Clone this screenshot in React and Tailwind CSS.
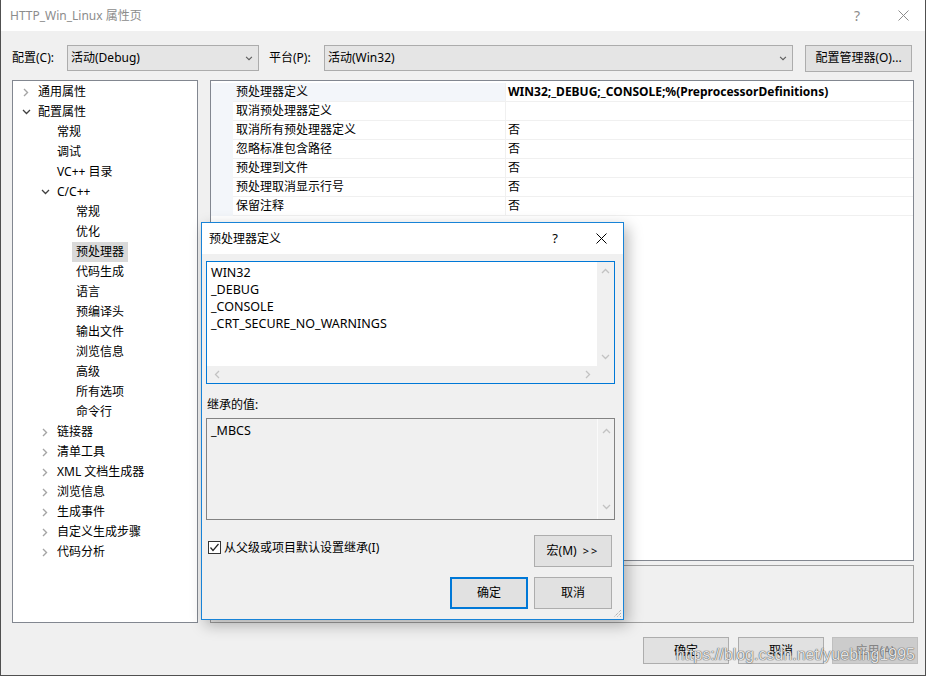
import React from 'react';

const tree = [
  { label: '通用属性', level: 0, chevron: 'right' },
  { label: '配置属性', level: 0, chevron: 'down' },
  { label: '常规', level: 1 },
  { label: '调试', level: 1 },
  { label: 'VC++ 目录', level: 1 },
  { label: 'C/C++', level: 1, chevron: 'down' },
  { label: '常规', level: 2 },
  { label: '优化', level: 2 },
  { label: '预处理器', level: 2, selected: true },
  { label: '代码生成', level: 2 },
  { label: '语言', level: 2 },
  { label: '预编译头', level: 2 },
  { label: '输出文件', level: 2 },
  { label: '浏览信息', level: 2 },
  { label: '高级', level: 2 },
  { label: '所有选项', level: 2 },
  { label: '命令行', level: 2 },
  { label: '链接器', level: 1, chevron: 'right' },
  { label: '清单工具', level: 1, chevron: 'right' },
  { label: 'XML 文档生成器', level: 1, chevron: 'right' },
  { label: '浏览信息', level: 1, chevron: 'right' },
  { label: '生成事件', level: 1, chevron: 'right' },
  { label: '自定义生成步骤', level: 1, chevron: 'right' },
  { label: '代码分析', level: 1, chevron: 'right' },
];

const props = [
  ['预处理器定义', 'WIN32;_DEBUG;_CONSOLE;%(PreprocessorDefinitions)'],
  ['取消预处理器定义', ''],
  ['取消所有预处理器定义', '否'],
  ['忽略标准包含路径', '否'],
  ['预处理到文件', '否'],
  ['预处理取消显示行号', '否'],
  ['保留注释', '否'],
];

function ChevronRight() {
  return (
    <svg width="6" height="9" viewBox="0 0 6 9" className="block">
      <polyline points="1,1 4.5,4.5 1,8" fill="none" stroke="#a5a5a5" strokeWidth="1.4" />
    </svg>
  );
}

function ChevronDown({ color = '#404040', w = 9, h = 6 }) {
  return (
    <svg width={w} height={h} viewBox="0 0 9 6" className="block">
      <polyline points="1,1 4.5,4.5 8,1" fill="none" stroke={color} strokeWidth="1.3" />
    </svg>
  );
}

function ChevronUp({ color = '#c2c2c2' }) {
  return (
    <svg width="9" height="6" viewBox="0 0 9 6" className="block">
      <polyline points="1,5 4.5,1.5 8,5" fill="none" stroke={color} strokeWidth="1.3" />
    </svg>
  );
}

function ChevronLeft({ color = '#c2c2c2' }) {
  return (
    <svg width="6" height="9" viewBox="0 0 6 9" className="block">
      <polyline points="5,1 1.5,4.5 5,8" fill="none" stroke={color} strokeWidth="1.3" />
    </svg>
  );
}

function ChevronRightLight({ color = '#c2c2c2' }) {
  return (
    <svg width="6" height="9" viewBox="0 0 6 9" className="block">
      <polyline points="1,1 4.5,4.5 1,8" fill="none" stroke={color} strokeWidth="1.3" />
    </svg>
  );
}

function CloseIcon({ color = '#000', size = 11 }) {
  return (
    <svg width={size} height={size} viewBox="0 0 11 11" className="block">
      <path d="M0.5 0.5 L10.5 10.5 M10.5 0.5 L0.5 10.5" stroke={color} strokeWidth="1" fill="none" />
    </svg>
  );
}

function Dropdown({ value, width }) {
  return (
    <div className={`${width} h-[26px] bg-[#e5e5e5] border border-[#acacac] flex items-center justify-between pl-[3px] pr-[5px]`}>
      <span>{value}</span>
      <ChevronDown color="#5c5c5c" w={8} h={5} />
    </div>
  );
}

function TreeRow({ item }) {
  const indent = item.level === 0 ? 'pl-[21px]' : item.level === 1 ? 'pl-[40px]' : 'pl-[59px]';
  return (
    <div className={`relative h-[20px] flex items-center ${indent}`}>
      {item.chevron && (
        <span className={`absolute ${item.level === 0 ? 'left-[9px]' : 'left-[28px]'} top-[6px]`}>
          {item.chevron === 'right' ? (
            <span className="block pl-[1px]"><ChevronRight /></span>
          ) : (
            <span className="block pt-[1px]"><ChevronDown /></span>
          )}
        </span>
      )}
      <span className={`h-[20px] flex items-center px-[4px] ${item.selected ? 'bg-[#d9d9d9]' : ''}`}>
        {item.label}
      </span>
    </div>
  );
}

function Checkbox() {
  return (
    <div className="w-[13px] h-[13px] border border-[#333] bg-white flex items-center justify-center">
      <svg width="11" height="11" viewBox="0 0 11 11" className="block">
        <polyline points="1.5,5.5 4,8.5 9.5,2" fill="none" stroke="#222" strokeWidth="1.2" />
      </svg>
    </div>
  );
}

function Dialog() {
  return (
    <div className="absolute left-[200px] top-[222px] w-[423px] h-[398px] border border-[#1883d7] bg-[#f0f0f0] shadow-[4px_5px_14px_rgba(0,0,0,0.28)] flex flex-col">
      <div className="h-[31px] bg-white flex items-center pl-[7px] shrink-0">
        <span className="flex-1">预处理器定义</span>
        <span className="text-[13px] mr-[38px]">?</span>
        <span className="mr-[16px]"><CloseIcon /></span>
      </div>
      <div className="flex flex-col pl-[4px] pr-[8px]">
        <div className="mt-[7px] h-[123px] border border-[#0078d7] bg-white flex flex-col">
          <div className="flex flex-1 min-h-0">
            <div className="flex-1 pl-[4px] pt-[2px] leading-[17px] text-[12.5px]">
              <div>WIN32</div>
              <div>_DEBUG</div>
              <div>_CONSOLE</div>
              <div>_CRT_SECURE_NO_WARNINGS</div>
            </div>
            <div className="w-[17px] bg-[#f0f0f0] flex flex-col items-center justify-between py-[6px]">
              <ChevronUp />
              <ChevronDown color="#c2c2c2" />
            </div>
          </div>
          <div className="h-[17px] bg-[#f0f0f0] flex items-center">
            <div className="flex-1 flex items-center justify-between pl-[7px] pr-[6px]">
              <ChevronLeft />
              <ChevronRightLight />
            </div>
            <div className="w-[17px]" />
          </div>
        </div>
        <div className="mt-[12px] leading-[17px] pl-[1px]">继承的值:</div>
        <div className="mt-[5px] h-[102px] border border-[#828282] bg-[#f0f0f0] flex">
          <div className="flex-1 pl-[4px] pt-[3px] leading-[17px] text-[12.5px]">_MBCS</div>
          <div className="w-[17px] border-l border-[#fafafa] flex flex-col items-center justify-between py-[9px]">
            <ChevronUp />
            <ChevronDown color="#c2c2c2" />
          </div>
        </div>
        <div className="mt-[15px] h-[32px] flex items-center">
          <div className="flex items-center gap-[3px] pl-[2px] -mt-[7px]">
            <Checkbox />
            <span>从父级或项目默认设置继承(I)</span>
          </div>
          <div className="flex-1" />
          <button className="w-[78px] h-[32px] mr-[3px] bg-[#e1e1e1] border border-[#adadad]">
            宏(M) <span className="ml-[3px] tracking-[2px] text-[11px]">&gt;&gt;</span>
          </button>
        </div>
        <div className="mt-[10px] h-[32px] flex justify-end gap-[6px] pr-[3px]">
          <button className="w-[78px] h-[32px] bg-[#e1e1e1] border-2 border-[#0078d7]">确定</button>
          <button className="w-[78px] h-[32px] bg-[#e1e1e1] border border-[#adadad]">取消</button>
        </div>
      </div>
      <div className="absolute right-[1px] bottom-[1px]">
        <svg width="11" height="11" viewBox="0 0 11 11" className="block">
          <path d="M10 3 L3 10 M10 6 L6 10 M10 9 L9 10" stroke="#9a9a9a" strokeWidth="1" strokeDasharray="1 1" fill="none" />
        </svg>
      </div>
    </div>
  );
}

export default function App() {
  return (
    <div className="relative w-[926px] h-[676px] bg-[#f0f0f0] border-l border-r border-b border-[#505050] flex flex-col text-[12px] text-black font-['Noto_Sans','Noto_Sans_CJK_SC',sans-serif] overflow-hidden">
      {/* Title bar */}
      <div className="h-[31px] bg-white flex items-center pl-[9px] text-[#8c8c8c] shrink-0">
        <span className="flex-1">HTTP_Win_Linux 属性页</span>
        <span className="text-[14px] mr-[38px]">?</span>
        <span className="mr-[16px]"><CloseIcon color="#8c8c8c" size={11} /></span>
      </div>

      {/* Configuration row */}
      <div className="mt-[14px] h-[26px] flex items-center pl-[11px] shrink-0">
        <span className="w-[55px]">配置(C):</span>
        <Dropdown value="活动(Debug)" width="w-[192px]" />
        <span className="ml-[10px] w-[55px]">平台(P):</span>
        <Dropdown value="活动(Win32)" width="w-[469px]" />
        <button className="ml-[12px] w-[107px] h-[27px] bg-[#e1e1e1] border border-[#adadad]">配置管理器(O)...</button>
      </div>

      {/* Main area */}
      <div className="mt-[9px] h-[543px] flex shrink-0">
        <div className="ml-[11px] w-[186px] bg-white border border-[#828790] pt-[1px]">
          {tree.map((item, i) => (
            <TreeRow key={i} item={item} />
          ))}
        </div>
        <div className="ml-[12px] w-[704px] flex flex-col">
          <div className="h-[483px] bg-white border border-[#828790] flex flex-col pt-[2px]">
            {props.map(([name, value], i) => (
              <div key={i} className="h-[19px] flex">
                <div className="w-[22px] bg-[#f3f6fa]" />
                <div className={`w-[273px] pl-[3px] flex items-center border-b border-r border-[#f0f0f0] ${i === 0 ? 'bg-[#f3f6fa]' : ''}`}>
                  {name}
                </div>
                <div className={`flex-1 pl-[2px] flex items-center border-b border-[#f0f0f0] ${i === 0 ? 'font-bold' : ''}`}>
                  {value}
                </div>
              </div>
            ))}
          </div>
          <div className="mt-[4px] h-[58px] bg-[#f0f0f0] border border-[#a0a0a0]" />
        </div>
      </div>

      {/* Bottom buttons */}
      <div className="relative mt-[14px] flex justify-end pr-[7px] gap-[9px]">
        <button className="w-[86px] h-[27px] bg-[#e1e1e1] border border-[#adadad]">确定</button>
        <button className="w-[86px] h-[27px] bg-[#e1e1e1] border border-[#adadad] mr-[-1px]">取消</button>
        <button className="w-[86px] h-[27px] bg-[#cccccc] border border-[#bfbfbf] text-[#838383]">应用(A)</button>
        <span className="absolute right-[10px] top-[9px] text-[16px] leading-[18px] text-white/85 font-['Liberation_Sans',sans-serif] [text-shadow:0_0_1px_#444,0_0_1px_#444]">
          https://blog.csdn.net/yuebing1995
        </span>
      </div>

      <Dialog />
    </div>
  );
}
